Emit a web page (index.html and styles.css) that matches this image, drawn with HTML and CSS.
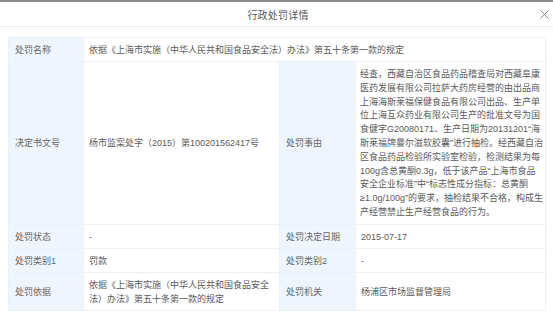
FILE: index.html
```html
<!DOCTYPE html>
<html lang="zh-CN">
<head>
<meta charset="utf-8">
<title>行政处罚详情</title>
<link rel="stylesheet" href="styles.css">
</head>
<body>
<div class="modal">
  <div class="modal-header">
    <span class="modal-title">行政处罚详情</span>
    <span class="modal-close" aria-label="关闭">
      <svg width="9" height="9" viewBox="0 0 9 9"><path d="M0.5 0.5 L8.5 8.5 M8.5 0.5 L0.5 8.5" stroke="#8a8a8a" stroke-width="1" fill="none"/></svg>
    </span>
  </div>
  <div class="modal-body">
    <table class="detail">
      <colgroup>
        <col class="c-label">
        <col class="c-value">
        <col class="c-label2">
        <col class="c-value2">
      </colgroup>
      <tr>
        <th>处罚名称</th>
        <td colspan="3">依据《上海市实施（中华人民共和国食品安全法）办法》第五十条第一款的规定</td>
      </tr>
      <tr>
        <th>决定书文号</th>
        <td>杨市监案处字（2015）第100201562417号</td>
        <th>处罚事由</th>
        <td class="long">经查，西藏自治区食品药品稽查局对西藏阜康医药发展有限公司拉萨大药房经营的由出品商上海海斯莱福保健食品有限公司出品、生产单位上海互众药业有限公司生产的批准文号为国食健字G20080171、生产日期为20131201“海斯莱福牌曼尔滋软胶囊”进行抽检。经西藏自治区食品药品检验所实验室检验，检测结果为每100g含总黄酮0.3g，低于该产品“上海市食品安全企业标准”中“标志性成分指标：总黄酮≥1.0g/100g”的要求，抽检结果不合格，构成生产经营禁止生产经营食品的行为。</td>
      </tr>
      <tr>
        <th>处罚状态</th>
        <td>-</td>
        <th>处罚决定日期</th>
        <td>2015-07-17</td>
      </tr>
      <tr>
        <th>处罚类别1</th>
        <td>罚款</td>
        <th>处罚类别2</th>
        <td>-</td>
      </tr>
      <tr>
        <th>处罚依据</th>
        <td>依据《上海市实施（中华人民共和国食品安全法）办法》第五十条第一款的规定</td>
        <th>处罚机关</th>
        <td>杨浦区市场监督管理局</td>
      </tr>
    </table>
  </div>
</div>
</body>
</html>
```

FILE: styles.css
```css
html, body {
  margin: 0;
  padding: 0;
  background: #ffffff;
}

body {
  font-family: "Liberation Sans", "Noto Sans CJK SC", sans-serif;
  color: #555;
}

.modal {
  border-top: 2px solid #8c8c8c;
  background: #fff;
}

.modal-header {
  position: relative;
  height: 24px;
  border-bottom: 1px solid #eeeeee;
  display: flex;
  align-items: center;
  justify-content: center;
}

.modal-title {
  font-size: 10px;
  color: #555;
  letter-spacing: 0.2px;
  padding-left: 3px;
}

.modal-close {
  position: absolute;
  right: 4px;
  top: 8px;
  width: 9px;
  height: 9px;
  display: flex;
}

.modal-body {
  padding: 10px 8px 0 8px;
}

.detail {
  width: 537px;
  border-collapse: collapse;
  table-layout: fixed;
  font-size: 9px;
  line-height: 14px;
}

.c-label { width: 75px; }
.c-value { width: 196px; }
.c-label2 { width: 76px; }
.c-value2 { width: 190px; }

.detail th,
.detail td {
  border: 1px solid #edf1f5;
  vertical-align: middle;
  text-align: left;
  font-weight: normal;
  padding: 5px 6px 4px 6px;
}

.detail th {
  background: #eef5fc;
  color: #666;
}

.detail td {
  color: #5a5a5a;
  padding-left: 5px;
}

.detail td.long {
  line-height: 13.8px;
  padding: 6px 1px 4px 4px;
}
```
